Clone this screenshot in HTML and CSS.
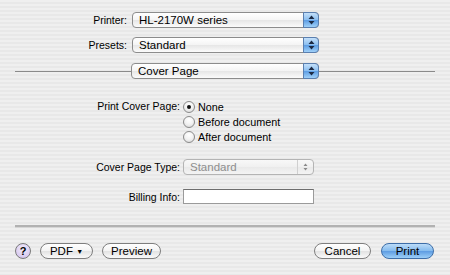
FILE: index.html
```html
<!DOCTYPE html>
<html lang="en">
<head>
  <meta charset="UTF-8">
  <title>Print</title>
  <link rel="stylesheet" href="styles.css">
</head>
<body>
  <div class="sheet">
    <div class="top">
      <div class="lbl">Printer:</div>
      <div class="popup">HL-2170W series<span class="arrows"><svg width="7" height="10" viewBox="0 0 7 10"><path d="M3.5 0.5 L6.5 4 L0.5 4 Z M3.5 9.5 L6.5 6 L0.5 6 Z"/></svg></span></div>
      <div class="lbl">Presets:</div>
      <div class="popup">Standard<span class="arrows"><svg width="7" height="10" viewBox="0 0 7 10"><path d="M3.5 0.5 L6.5 4 L0.5 4 Z M3.5 9.5 L6.5 6 L0.5 6 Z"/></svg></span></div>
    </div>

    <div class="divider">
      <span class="line"></span>
      <div class="popup">Cover Page<span class="arrows"><svg width="7" height="10" viewBox="0 0 7 10"><path d="M3.5 0.5 L6.5 4 L0.5 4 Z M3.5 9.5 L6.5 6 L0.5 6 Z"/></svg></span></div>
      <span class="line"></span>
    </div>

    <div class="options">
      <div class="lbl first">Print Cover Page:</div>
      <div class="radios">
        <div class="radio"><span class="dot on"></span>None</div>
        <div class="radio"><span class="dot"></span>Before document</div>
        <div class="radio"><span class="dot"></span>After document</div>
      </div>
      <div class="lbl">Cover Page Type:</div>
      <div class="popup disabled">Standard<span class="arrows"><svg width="7" height="10" viewBox="0 0 7 10"><path d="M3.5 1.5 L5.5 4 L1.5 4 Z M3.5 8.5 L5.5 6 L1.5 6 Z"/></svg></span></div>
      <div class="lbl">Billing Info:</div>
      <div class="field"></div>
    </div>

    <div class="panel-end"></div>

    <div class="buttons">
      <span class="help">?</span>
      <span class="btn pdf">PDF <span class="tri">&#9660;</span></span>
      <span class="btn preview">Preview</span>
      <span class="spacer"></span>
      <span class="btn cancel">Cancel</span>
      <span class="btn print">Print</span>
    </div>
  </div>
</body>
</html>
```

FILE: styles.css
```css
body {
  margin: 0;
  font-family: "Liberation Sans", Arial, sans-serif;
  font-size: 11px;
  color: #000;
}
.sheet {
  width: 450px;
  height: 275px;
  overflow: hidden;
  background: repeating-linear-gradient(to bottom, #efefef 0, #efefef 2px, #e8e8e8 2px, #e8e8e8 4px);
}
.top {
  display: grid;
  grid-template-columns: 127px 187px;
  column-gap: 5px;
  row-gap: 9px;
  padding-top: 12px;
  align-items: center;
}
.lbl {
  text-align: right;
  white-space: nowrap;
  font-size: 10.5px;
}
.popup {
  position: relative;
  box-sizing: border-box;
  height: 16px;
  line-height: 14px;
  padding-left: 6px;
  border: 1px solid #8c8c8c;
  border-radius: 4px;
  background: linear-gradient(to bottom, #ffffff 0%, #f4f4f4 50%, #e6e6e6 51%, #fbfbfb 100%);
  white-space: nowrap;
  font-size: 11.5px;
}
.arrows {
  position: absolute;
  top: -1px;
  right: -1px;
  width: 16px;
  height: 16px;
  box-sizing: border-box;
  border: 1px solid #5a7fb0;
  border-radius: 0 4px 4px 0;
  background: linear-gradient(to bottom, #c4e0fa 0%, #8cbff0 48%, #5d9de4 52%, #9fd0f8 100%);
  display: flex;
  align-items: center;
  justify-content: center;
}
.arrows svg {
  fill: #1c2a44;
}
.divider {
  display: flex;
  align-items: center;
  margin-top: 10px;
  padding: 0 15px;
}
.divider .popup {
  width: 188px;
  flex: none;
}
.line {
  flex: 1;
  height: 1px;
  background: #8a8a8a;
}
.options {
  display: grid;
  grid-template-columns: 180px 131px;
  column-gap: 3px;
  row-gap: 14px;
  margin-top: 20px;
  align-items: center;
}
.options .first {
  align-self: start;
  line-height: 15px;
}
.radios {
  margin-bottom: 1px;
}
.radio {
  display: flex;
  align-items: center;
  height: 15px;
  gap: 3px;
  white-space: nowrap;
  font-size: 10.8px;
}
.dot {
  box-sizing: border-box;
  width: 12px;
  height: 12px;
  border-radius: 50%;
  border: 1px solid #8a8a8a;
  background: radial-gradient(circle at 50% 30%, #ffffff 0%, #f2f2f2 50%, #d4d4d4 100%);
  display: flex;
  align-items: center;
  justify-content: center;
}
.dot.on::after {
  content: "";
  width: 4px;
  height: 4px;
  border-radius: 50%;
  background: #111;
}
.options .popup {
  width: 131px;
}
.popup.disabled {
  color: #8e8e8e;
  border-color: #b4b4b4;
  background: linear-gradient(to bottom, #f8f8f8 0%, #f0f0f0 50%, #e9e9e9 51%, #f4f4f4 100%);
}
.popup.disabled .arrows {
  border: none;
  border-left: 1px solid #d0d0d0;
  background: transparent;
  top: 0;
  right: 0;
  height: 14px;
}
.popup.disabled .arrows svg {
  fill: #8a8a8a;
}
.field {
  box-sizing: border-box;
  width: 131px;
  height: 15px;
  background: #fff;
  border: 1px solid #9a9a9a;
  border-top-color: #6e6e6e;
}
.panel-end {
  margin: 21px 15px 0;
  height: 2px;
  background: #b2b2b2;
  border-bottom: 1px solid #d6d6d6;
}
.buttons {
  display: flex;
  align-items: center;
  margin-top: 15px;
  padding: 0 16px 0 15px;
}
.help {
  box-sizing: border-box;
  width: 16px;
  height: 16px;
  border-radius: 50%;
  border: 1px solid #7a7a7a;
  background: radial-gradient(circle at 50% 35%, #f2ecfb 0%, #d9cbf0 70%, #c6b4e6 100%);
  font-weight: bold;
  font-size: 11px;
  line-height: 14px;
  text-align: center;
  margin-right: 9px;
}
.btn {
  box-sizing: border-box;
  height: 16px;
  line-height: 14px;
  border: 1px solid #7e7e7e;
  border-radius: 8px;
  background: linear-gradient(to bottom, #ffffff 0%, #f3f3f3 50%, #e2e2e2 51%, #fafafa 100%);
  text-align: center;
  font-size: 11.5px;
  white-space: nowrap;
}
.pdf {
  width: 53px;
  margin-right: 9px;
}
.tri {
  font-size: 7px;
  vertical-align: 1px;
}
.preview {
  width: 59px;
}
.spacer {
  flex: 1;
}
.cancel {
  width: 57px;
  margin-right: 10px;
}
.print {
  width: 53px;
  border-color: #3e6ea8;
  background: linear-gradient(to bottom, #bcdcf8 0%, #86bcee 48%, #5e9ce2 52%, #9ccff8 100%);
}
```
